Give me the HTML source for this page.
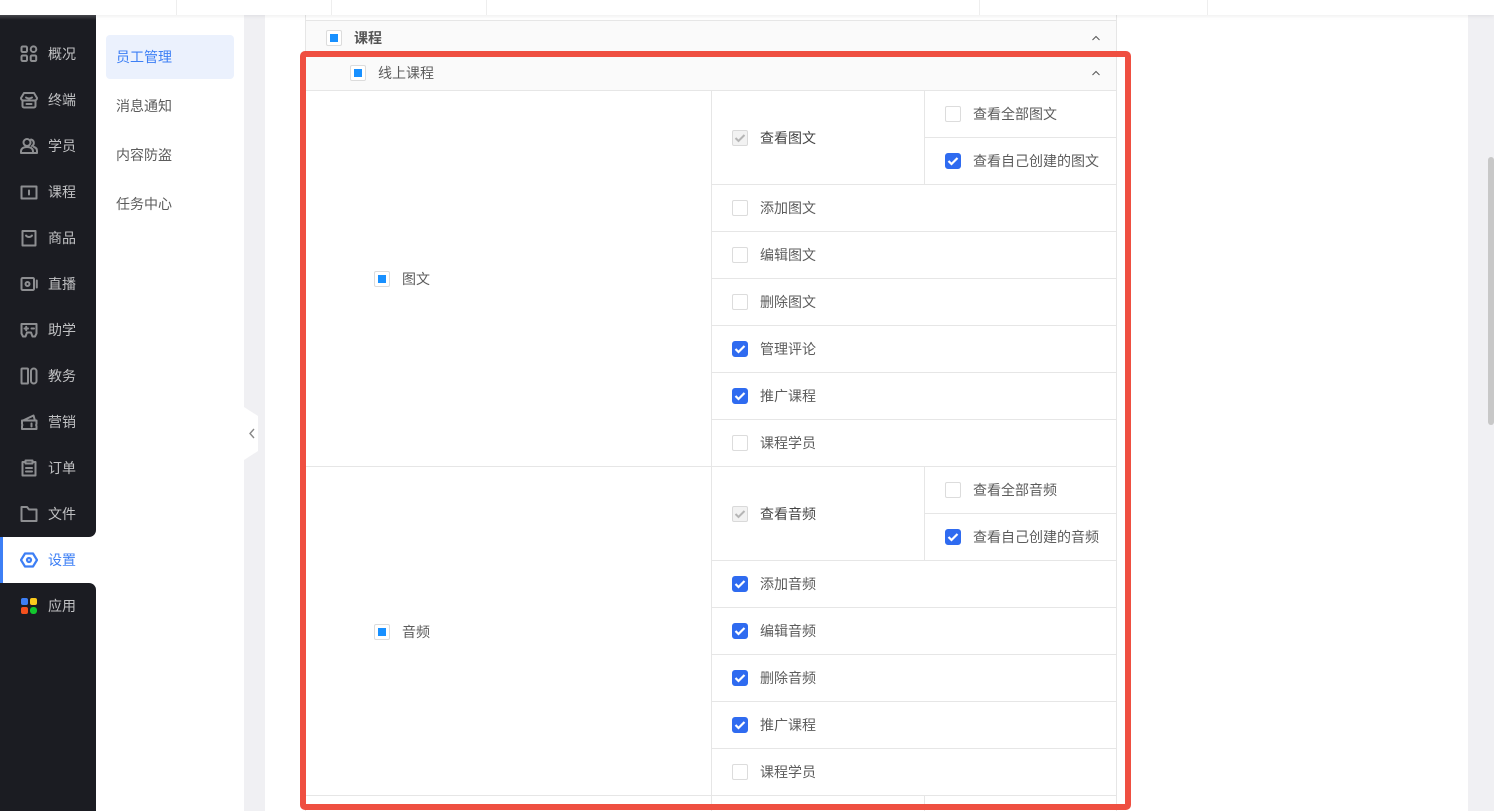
<!DOCTYPE html>
<html lang="zh"><head><meta charset="utf-8"><title>员工管理</title>
<style>
*{box-sizing:border-box}
html,body{margin:0;padding:0;width:1494px;height:811px;overflow:hidden;background:#fff;font-family:"Liberation Sans","Noto Sans CJK SC",sans-serif;font-size:14px;color:#5c5c5c}
.a{position:absolute}
.t{position:absolute;white-space:nowrap;line-height:20px;height:20px}
.h{position:absolute;height:1px;background:#e6e6e6}
.v{position:absolute;width:1px;background:#e6e6e6}
.cb{position:absolute;width:16px;height:16px;border:1px solid #dcdcdc;border-radius:2px;background:#fff}
.cb.on{background:#2f6bf0;border-color:#2f6bf0;border-radius:3px}
.cb.on svg,.cb.dis svg{position:absolute;left:0;top:0}
.cb.dis{background:#f2f2f2;border-color:#d9d9d9}
.cb.ind::after{content:"";position:absolute;left:3px;top:3px;width:8px;height:8px;background:#1890ff}
.nav{position:absolute;left:48px;color:#c0c1c3;font-size:14px;line-height:20px;white-space:nowrap}
.ic{position:absolute;left:20px;width:18px;height:18px;fill:none;stroke:#8d8e91;stroke-width:2;stroke-linejoin:round;stroke-linecap:round}
.sub{position:absolute;left:116px;font-size:14px;line-height:20px;color:#5c5c5c}
</style></head><body>

<!-- backgrounds -->
<div class="a" style="left:244px;top:15px;width:21px;height:796px;background:#f0f0f3"></div>
<div class="a" style="left:1468px;top:15px;width:26px;height:796px;background:#f0f0f3"></div>
<div class="a" style="left:1488px;top:157px;width:6px;height:268px;background:#c8c8c8;border-radius:3px"></div>

<!-- table headers -->
<div class="a" style="left:305px;top:20px;width:812px;height:71px;background:#fafafa"></div>
<div class="h" style="left:305px;top:20px;width:812px"></div>
<div class="h" style="left:305px;top:90px;width:812px"></div>
<div class="v" style="left:305px;top:15px;height:796px"></div>
<div class="v" style="left:1116px;top:15px;height:796px"></div>
<div class="v" style="left:711px;top:90px;height:721px"></div>
<div class="v" style="left:924px;top:90px;height:94px"></div>
<div class="v" style="left:924px;top:466px;height:94px"></div>
<div class="v" style="left:924px;top:795px;height:16px"></div>

<div class="h" style="left:924px;top:137px;width:192px"></div>
<div class="h" style="left:711px;top:184px;width:405px"></div>
<div class="h" style="left:711px;top:231px;width:405px"></div>
<div class="h" style="left:711px;top:278px;width:405px"></div>
<div class="h" style="left:711px;top:325px;width:405px"></div>
<div class="h" style="left:711px;top:372px;width:405px"></div>
<div class="h" style="left:711px;top:419px;width:405px"></div>
<div class="h" style="left:305px;top:466px;width:811px"></div>
<div class="h" style="left:924px;top:513px;width:192px"></div>
<div class="h" style="left:711px;top:560px;width:405px"></div>
<div class="h" style="left:711px;top:607px;width:405px"></div>
<div class="h" style="left:711px;top:654px;width:405px"></div>
<div class="h" style="left:711px;top:701px;width:405px"></div>
<div class="h" style="left:711px;top:748px;width:405px"></div>
<div class="h" style="left:305px;top:795px;width:811px"></div>

<!-- headers content -->
<div class="cb ind" style="left:326px;top:30px"></div>
<div class="t" style="left:354px;top:28px;font-weight:700;color:#555">课程</div>
<svg class="a" style="left:1091px;top:34px" width="10" height="8" fill="none" stroke="#555" stroke-width="1"><path d="M1.500 6L5 2.500L8.500 6"/></svg>
<div class="cb ind" style="left:350px;top:65px"></div>
<div class="t" style="left:378px;top:63px">线上课程</div>
<svg class="a" style="left:1091px;top:69px" width="10" height="8" fill="none" stroke="#555" stroke-width="1"><path d="M1.500 6L5 2.500L8.500 6"/></svg>

<!-- group 1 -->
<div class="cb ind" style="left:374px;top:271px"></div>
<div class="t" style="left:402px;top:269px">图文</div>
<div class="cb dis" style="left:732px;top:130px"><svg width="14" height="14" fill="none" stroke="#b5b5b5" stroke-width="2"><path d="M2.500 7l3 3l6-6"/></svg></div>
<div class="t" style="left:760px;top:128px;color:#444">查看图文</div>
<div class="cb" style="left:945px;top:106px"></div>
<div class="t" style="left:973px;top:104px">查看全部图文</div>
<div class="cb on" style="left:945px;top:153px"><svg width="14" height="14" fill="none" stroke="#fff" stroke-width="2.200"><path d="M2.500 7l3 3l6-6"/></svg></div>
<div class="t" style="left:973px;top:151px">查看自己创建的图文</div>
<div class="cb" style="left:732px;top:200px"></div><div class="t" style="left:760px;top:198px">添加图文</div>
<div class="cb" style="left:732px;top:247px"></div><div class="t" style="left:760px;top:245px">编辑图文</div>
<div class="cb" style="left:732px;top:294px"></div><div class="t" style="left:760px;top:292px">删除图文</div>
<div class="cb on" style="left:732px;top:341px"><svg width="14" height="14" fill="none" stroke="#fff" stroke-width="2.200"><path d="M2.500 7l3 3l6-6"/></svg></div><div class="t" style="left:760px;top:339px">管理评论</div>
<div class="cb on" style="left:732px;top:388px"><svg width="14" height="14" fill="none" stroke="#fff" stroke-width="2.200"><path d="M2.500 7l3 3l6-6"/></svg></div><div class="t" style="left:760px;top:386px">推广课程</div>
<div class="cb" style="left:732px;top:435px"></div><div class="t" style="left:760px;top:433px">课程学员</div>

<!-- group 2 -->
<div class="cb ind" style="left:374px;top:624px"></div>
<div class="t" style="left:402px;top:622px">音频</div>
<div class="cb dis" style="left:732px;top:506px"><svg width="14" height="14" fill="none" stroke="#b5b5b5" stroke-width="2"><path d="M2.500 7l3 3l6-6"/></svg></div>
<div class="t" style="left:760px;top:504px;color:#444">查看音频</div>
<div class="cb" style="left:945px;top:482px"></div>
<div class="t" style="left:973px;top:480px">查看全部音频</div>
<div class="cb on" style="left:945px;top:529px"><svg width="14" height="14" fill="none" stroke="#fff" stroke-width="2.200"><path d="M2.500 7l3 3l6-6"/></svg></div>
<div class="t" style="left:973px;top:527px">查看自己创建的音频</div>
<div class="cb on" style="left:732px;top:576px"><svg width="14" height="14" fill="none" stroke="#fff" stroke-width="2.200"><path d="M2.500 7l3 3l6-6"/></svg></div><div class="t" style="left:760px;top:574px">添加音频</div>
<div class="cb on" style="left:732px;top:623px"><svg width="14" height="14" fill="none" stroke="#fff" stroke-width="2.200"><path d="M2.500 7l3 3l6-6"/></svg></div><div class="t" style="left:760px;top:621px">编辑音频</div>
<div class="cb on" style="left:732px;top:670px"><svg width="14" height="14" fill="none" stroke="#fff" stroke-width="2.200"><path d="M2.500 7l3 3l6-6"/></svg></div><div class="t" style="left:760px;top:668px">删除音频</div>
<div class="cb on" style="left:732px;top:717px"><svg width="14" height="14" fill="none" stroke="#fff" stroke-width="2.200"><path d="M2.500 7l3 3l6-6"/></svg></div><div class="t" style="left:760px;top:715px">推广课程</div>
<div class="cb" style="left:732px;top:764px"></div><div class="t" style="left:760px;top:762px">课程学员</div>

<!-- red annotation -->
<div class="a" style="left:300px;top:51px;width:831px;height:759px;border:6px solid #ef4f41;border-radius:5px"></div>

<!-- top bar -->
<div class="a" style="left:0;top:0;width:1494px;height:15px;background:#fff;box-shadow:0 1px 4px rgba(0,0,0,.08)"></div>
<div class="v" style="left:176px;top:0;height:15px;background:#eee"></div>
<div class="v" style="left:331px;top:0;height:15px;background:#eee"></div>
<div class="v" style="left:486px;top:0;height:15px;background:#eee"></div>
<div class="v" style="left:979px;top:0;height:15px;background:#eee"></div>
<div class="v" style="left:1207px;top:0;height:15px;background:#eee"></div>

<!-- sidebar -->
<div class="a" style="left:0;top:15px;width:96px;height:522px;background:#1b1c22;border-bottom-right-radius:7px"></div>
<div class="a" style="left:0;top:15px;width:96px;height:5px;background:linear-gradient(#45464b,#1b1c22)"></div>
<div class="a" style="left:0;top:537px;width:96px;height:46px;background:#fff"></div>
<div class="a" style="left:0;top:537px;width:3px;height:46px;background:#3d7ff5"></div>
<div class="a" style="left:0;top:583px;width:96px;height:228px;background:#1b1c22;border-top-right-radius:7px"></div>

<svg class="ic" style="top:45px" viewBox="0 0 18 18"><rect x="1.500" y="1.500" width="5.500" height="5.500" rx="1.200"/><circle cx="13.500" cy="4.200" r="2.800"/><rect x="1.500" y="10.500" width="5.500" height="5.500" rx="1.200"/><rect x="10.700" y="10.500" width="5.500" height="5.500" rx="1.200"/></svg>
<div class="nav" style="top:44px">概况</div>
<svg class="ic" style="top:91px" viewBox="0 0 18 18"><path d="M4 2h10l3 5a2.500 2.500 0 0 1-2.500 2.500h-11A2.500 2.500 0 0 1 1 7z"/><path d="M2.500 9.500V15a1.500 1.500 0 0 0 1.500 1.500h10a1.500 1.500 0 0 0 1.500-1.500V9.500"/><path d="M6 6.500c1.500 1.300 4.500 1.300 6 0M6.500 13h5"/></svg>
<div class="nav" style="top:90px">终端</div>
<svg class="ic" style="top:137px" viewBox="0 0 18 18"><circle cx="7" cy="5.500" r="3.500"/><path d="M1 16v-1.500C1 11.500 3.500 10 7 10s6 1.500 6 4.500V16z"/><path d="M11 2.500a3.500 3.500 0 0 1 1 6.500M14 10c2 .6 3 2 3 4v2h-4"/></svg>
<div class="nav" style="top:136px">学员</div>
<svg class="ic" style="top:183px" viewBox="0 0 18 18"><path d="M1.500 3.500h15v12h-15z"/><path d="M9 7.500v4" stroke-width="2"/></svg>
<div class="nav" style="top:182px">课程</div>
<svg class="ic" style="top:229px" viewBox="0 0 18 18"><path d="M2.500 2h13v14.500h-13z"/><path d="M6 6.500c1.500 2 4.500 2 6 0"/></svg>
<div class="nav" style="top:228px">商品</div>
<svg class="ic" style="top:275px" viewBox="0 0 18 18"><rect x="1.500" y="3" width="12.500" height="12" rx="1.200"/><circle cx="7.500" cy="9" r="2"/><path d="M16.800 5.500v7" stroke-width="2"/></svg>
<div class="nav" style="top:274px">直播</div>
<svg class="ic" style="top:321px" viewBox="0 0 18 18"><path d="M1.500 3h15v9.500l-1.500 3h-2.500L11 11.500H7l-1.500 4H3l-1.500-3z"/><path d="M4.500 7.500h3.500M6.200 5.800v3.400M11.500 7.500h2.500"/></svg>
<div class="nav" style="top:320px">助学</div>
<svg class="ic" style="top:367px" viewBox="0 0 18 18"><rect x="1.500" y="1.500" width="6.500" height="15" rx=".8"/><rect x="11" y="1.500" width="5.500" height="15" rx="2.700"/></svg>
<div class="nav" style="top:366px">教务</div>
<svg class="ic" style="top:413px" viewBox="0 0 18 18"><path d="M3 7.500L13.500 2.500l1.500 5"/><path d="M2 7.500h14.500V11a1.800 1.800 0 0 0 0 2v3H2v-3a1.800 1.800 0 0 0 0-2z"/><path d="M11.500 10.500v3"/></svg>
<div class="nav" style="top:412px">营销</div>
<svg class="ic" style="top:459px" viewBox="0 0 18 18"><path d="M5.500 3H2.500v13.500h13V3h-3"/><path d="M5.500 1.500h7v3h-7zM6 9h6M6 12.500h6"/></svg>
<div class="nav" style="top:458px">订单</div>
<svg class="ic" style="top:505px" viewBox="0 0 18 18"><path d="M1.500 2h5.500l2 2.500h7.500V16h-15z"/></svg>
<div class="nav" style="top:504px">文件</div>
<svg class="ic" style="top:551px;stroke:#3d7ff5;stroke-width:2.200" viewBox="0 0 18 18"><path d="M5 2.500h8L17 9l-4 6.500H5L1 9z"/><circle cx="9" cy="9" r="2"/></svg>
<div class="nav" style="top:550px;color:#3d7ff5">设置</div>
<svg class="a" style="left:20px;top:597px" width="18" height="18" viewBox="0 0 18 18"><rect x="1" y="1" width="7" height="7" rx="2" fill="#3d7ff5"/><rect x="10" y="1" width="7" height="7" rx="2" fill="#fbc91c"/><rect x="1" y="10" width="7" height="7" rx="2" fill="#f4511e"/><rect x="10" y="10" width="7" height="7" rx="3" fill="#12c72e"/></svg>
<div class="nav" style="top:596px">应用</div>

<!-- sub menu -->
<div class="a" style="left:106px;top:35px;width:128px;height:44px;background:#ebf1fd;border-radius:4px"></div>
<div class="sub" style="top:47px;color:#3d7ff5">员工管理</div>
<div class="sub" style="top:96px">消息通知</div>
<div class="sub" style="top:145px">内容防盗</div>
<div class="sub" style="top:194px">任务中心</div>

<!-- collapse handle -->
<svg class="a" style="left:244px;top:405px" width="16" height="56" viewBox="0 0 16 56"><path d="M0 2L14 11V46L0 55z" fill="#fff"/><path d="M10 24l-4 4.500L10 33" fill="none" stroke="#888" stroke-width="1.400"/></svg>
</body></html>
